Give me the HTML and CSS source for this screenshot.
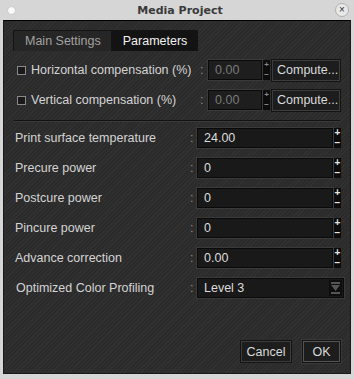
FILE: index.html
```html
<!DOCTYPE html>
<html lang="en">
<head>
  <meta charset="UTF-8" />
  <title>Media Project</title>
  <link rel="stylesheet" href="styles.css">
</head>
<body>
  <div class="window">
    <div class="titlebar">
      <span class="dot"></span>
      <span class="title">Media Project</span>
      <span class="close">&#215;</span>
    </div>
    <div class="frame">
      <div class="tabs">
        <div class="tab">Main Settings</div>
        <div class="tab active">Parameters</div>
      </div>
      <div class="pane">
        <div class="row">
          <label class="label check"><span class="box"></span>Horizontal compensation (%)</label>
          <span class="colon wide">:</span>
          <div class="field small disabled">0.00</div>
          <div class="spin dim"><span>+</span><span>&#8722;</span></div>
          <button class="btn compute">Compute...</button>
        </div>
        <div class="row">
          <label class="label check"><span class="box"></span>Vertical compensation (%)</label>
          <span class="colon wide">:</span>
          <div class="field small disabled">0.00</div>
          <div class="spin dim"><span>+</span><span>&#8722;</span></div>
          <button class="btn compute">Compute...</button>
        </div>
        <div class="sep"></div>
        <div class="row">
          <span class="label">Print surface temperature</span>
          <span class="colon">:</span>
          <div class="field">24.00</div>
          <div class="spin"><span>+</span><span>&#8722;</span></div>
        </div>
        <div class="row">
          <span class="label">Precure power</span>
          <span class="colon">:</span>
          <div class="field">0</div>
          <div class="spin"><span>+</span><span>&#8722;</span></div>
        </div>
        <div class="row">
          <span class="label">Postcure power</span>
          <span class="colon">:</span>
          <div class="field">0</div>
          <div class="spin"><span>+</span><span>&#8722;</span></div>
        </div>
        <div class="row">
          <span class="label">Pincure power</span>
          <span class="colon">:</span>
          <div class="field">0</div>
          <div class="spin"><span>+</span><span>&#8722;</span></div>
        </div>
        <div class="row">
          <span class="label">Advance correction</span>
          <span class="colon">:</span>
          <div class="field">0.00</div>
          <div class="spin"><span>+</span><span>&#8722;</span></div>
        </div>
        <div class="row">
          <span class="label indent">Optimized Color Profiling</span>
          <span class="colon">:</span>
          <div class="field combo">Level 3
            <span class="arrow"><svg width="9" height="14" viewBox="0 0 9 14"><rect x="0" y="1" width="9" height="2" fill="#555"/><path d="M0 4 L9 4 L4.5 10 Z" fill="#555"/><rect x="0" y="11" width="9" height="2" fill="#555"/></svg></span>
          </div>
        </div>
      </div>
      <div class="footer">
        <button class="btn">Cancel</button>
        <button class="btn ok">OK</button>
      </div>
    </div>
  </div>
</body>
</html>
```

FILE: styles.css
```css
body {
  margin: 0;
  background: #d6d6d6;
  font-family: "Liberation Sans", Arial, sans-serif;
  font-size: 12.5px;
}
.window {
  width: 354px;
  height: 379px;
  display: flex;
  flex-direction: column;
}
.titlebar {
  height: 20px;
  display: flex;
  align-items: center;
  justify-content: space-between;
  padding: 0 5px 0 8px;
  box-sizing: border-box;
}
.dot {
  width: 7px;
  height: 7px;
  border-radius: 50%;
  background: #fafafa;
  box-shadow: 0 0 1px #999;
}
.title {
  font-family: "DejaVu Sans", sans-serif;
  font-weight: bold;
  font-size: 11px;
  color: #3a3a3a;
  padding-left: 10px;
}
.close {
  width: 12px;
  height: 12px;
  border-radius: 50%;
  border: 1px solid #b0b0b0;
  background: #e8e8e8;
  color: #333;
  font-size: 10px;
  line-height: 12px;
  text-align: center;
}
.frame {
  margin: 0 3px 5px 3px;
  flex: 1;
  border: 1px solid #1a1a1a;
  border-top-color: #000;
  background-color: #2b2b2b;
  background-image: repeating-linear-gradient(135deg, rgba(255,255,255,0.03) 0 1px, transparent 1px 3px);
  display: flex;
  flex-direction: column;
}
.tabs {
  display: flex;
  padding: 9px 0 0 9px;
}
.tab {
  height: 20px;
  line-height: 20px;
  padding: 0 10px 0 11px;
  background: #262626;
  color: #a2a2a2;
  border: 1px solid #141414;
  border-bottom: none;
}
.tab.active {
  background: #131313;
  color: #f2f2f2;
  padding: 0 10px 0 10px;
}
.pane {
  padding: 9px 0 0 11px;
}
.row {
  height: 20px;
  margin-bottom: 10px;
  display: flex;
  align-items: center;
  color: #d4d4d4;
}
.label {
  width: 175px;
  white-space: nowrap;
}
.label.indent {
  padding-left: 1px;
  width: 174px;
}
.label.check {
  display: flex;
  align-items: center;
  width: 185px;
}
.box {
  width: 7px;
  height: 7px;
  background: #1a1a1a;
  border: 1px solid #8a8a8a;
  margin: 0 5px 0 2px;
}
.colon {
  color: #8c8c8c;
  width: 7px;
}
.colon.wide {
  width: 8px;
}
.field {
  box-sizing: border-box;
  width: 136px;
  height: 20px;
  line-height: 18px;
  padding-left: 6px;
  background: #191919;
  border: 1px solid #0a0a0a;
  box-shadow: 0 0 0 1px #3a3a3a;
  color: #dcdcdc;
}
.field.small {
  width: 54px;
}
.field.disabled {
  color: #7a7a7a;
  background: #1e1e1e;
}
.spin {
  width: 7px;
  height: 20px;
  background: #0c0c0c;
  display: flex;
  flex-direction: column;
  justify-content: space-between;
  color: #e8e8e8;
  font-size: 10px;
  font-weight: bold;
  line-height: 10px;
  text-align: center;
  margin-left: 1px;
}
.spin.dim {
  color: #8a8a8a;
  font-size: 8px;
}
.btn {
  font-family: "Liberation Sans", Arial, sans-serif;
  font-size: 12.5px;
  height: 21px;
  padding: 0 4px;
  background: #1d1d1d;
  color: #dadada;
  border: 1px solid #3c3c3c;
  box-shadow: 0 0 0 1px #141414;
}
.compute {
  margin-left: 2px;
  width: 68px;
}
.sep {
  margin: 0 10px 6px -1px;
  height: 1px;
  background: #121212;
  border-bottom: 1px solid #3a3a3a;
}
.combo {
  width: 147px;
  position: relative;
}
.arrow {
  position: absolute;
  right: 1px;
  top: 1px;
  width: 13px;
  height: 16px;
  background: #0e0e0e;
  display: flex;
  align-items: center;
  justify-content: center;
}
.footer {
  margin-top: auto;
  display: flex;
  justify-content: flex-end;
  gap: 12px;
  padding: 0 10px 11px 0;
}
.btn:not(.compute) {
  width: 50px;
}
.btn.ok {
  width: 37px;
  border-color: #555;
  box-shadow: 0 0 0 1px #111, 0 0 0 2px #3a3a3a;
}
```
